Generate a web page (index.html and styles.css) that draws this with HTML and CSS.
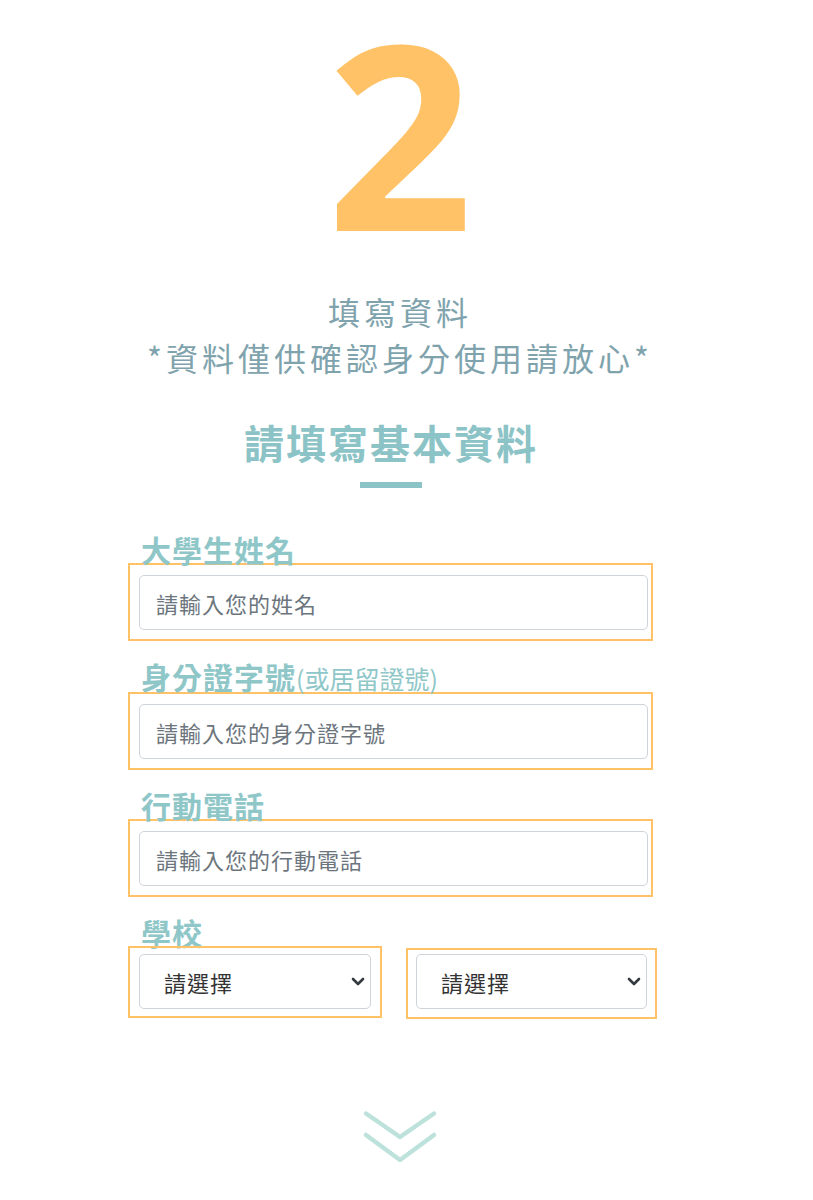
FILE: index.html
```html
<!DOCTYPE html>
<html lang="zh-Hant">
<head>
    <meta charset="UTF-8">
    <meta name="viewport" content="width=device-width, initial-scale=1.0">
    <title>填寫資料</title>
    <link rel="stylesheet" href="styles.css">
</head>
<body>
    <div class="page">
        <section class="step">
            <div class="step-num">2</div>
            <p class="step-title">填寫資料<br>*資料僅供確認身分使用請放心*</p>
        </section>

        <section class="intro">
            <h2 class="heading">請填寫基本資料</h2>
            <div class="bar"></div>
        </section>

        <form class="form">
            <label class="label" for="name">大學生姓名</label>
            <div class="box">
                <input class="control" type="text" id="name" placeholder="請輸入您的姓名">
            </div>

            <label class="label" for="idno">身分證字號<span class="label-note">(或居留證號)</span></label>
            <div class="box">
                <input class="control" type="text" id="idno" placeholder="請輸入您的身分證字號">
            </div>

            <label class="label" for="phone">行動電話</label>
            <div class="box">
                <input class="control" type="text" id="phone" placeholder="請輸入您的行動電話">
            </div>

            <label class="label" for="school">學校</label>
            <div class="row">
                <div class="box box-select">
                    <div class="select-wrap">
                        <select class="control select" id="school">
                            <option>請選擇</option>
                        </select>
                        <svg class="caret" width="14" height="9" viewBox="0 0 14 9"><path d="M2 2l5 5 5-5" fill="none" stroke="#343a40" stroke-width="2.6" stroke-linecap="round" stroke-linejoin="round"/></svg>
                    </div>
                </div>
                <div class="box box-select box-right">
                    <div class="select-wrap">
                        <select class="control select" id="dept">
                            <option>請選擇</option>
                        </select>
                        <svg class="caret" width="14" height="9" viewBox="0 0 14 9"><path d="M2 2l5 5 5-5" fill="none" stroke="#343a40" stroke-width="2.6" stroke-linecap="round" stroke-linejoin="round"/></svg>
                    </div>
                </div>
            </div>
        </form>

        <div class="more">
            <svg width="80" height="57" viewBox="0 0 80 57">
                <path d="M6 5.5L40 29L74 5.5" fill="none" stroke="#bde2db" stroke-width="4.5" stroke-linecap="round" stroke-linejoin="round"/>
                <path d="M6 27L40 52L74 27" fill="none" stroke="#bde2db" stroke-width="4.5" stroke-linecap="round" stroke-linejoin="round"/>
            </svg>
        </div>
    </div>
</body>
</html>
```

FILE: styles.css
```css
body {
    margin: 0;
    padding: 0;
    background-color: #fff;
    font-family: "Noto Sans CJK TC", "Noto Sans", sans-serif;
}
.page {
    width: 800px;
}
.step {
    text-align: center;
}
.step-num {
    padding-top: 4px;
    font-family: "Open Sans", "Noto Sans", sans-serif;
    font-size: 256px;
    font-weight: 700;
    line-height: 256px;
    color: #ffc266;
}
.step-title {
    margin: 28px 0 0;
    font-size: 32px;
    line-height: 46px;
    letter-spacing: 4px;
    color: #7fa3ad;
}
.intro {
    padding-right: 18px;
    text-align: center;
}
.heading {
    margin: 38px 0 0;
    font-size: 40px;
    font-weight: 700;
    line-height: 48px;
    letter-spacing: 2px;
    color: #8cc3c6;
}
.bar {
    width: 62px;
    height: 6px;
    margin: 16px auto 0;
    background-color: #8cc3c6;
}
.form {
    width: 530px;
    margin: 46px 0 0 128px;
}
.label {
    display: block;
    margin: 20px 0 -1px 13px;
    font-size: 30px;
    font-weight: 700;
    line-height: 30px;
    letter-spacing: 1px;
    color: #8fc7c9;
}
.label:first-child {
    margin-top: 0;
}
.label-note {
    font-size: 25px;
    font-weight: 400;
    letter-spacing: 0;
}
.box {
    width: 525px;
    box-sizing: border-box;
    padding: 10px 3px 9px 9px;
    border: 2px solid #ffc266;
}
.control {
    display: block;
    width: 100%;
    height: 55px;
    box-sizing: border-box;
    padding: 0 16px;
    font-family: "Noto Sans CJK TC", "Noto Sans", sans-serif;
    font-size: 22px;
    letter-spacing: 1px;
    color: #495057;
    background-color: #fff;
    border: 1px solid #ced4da;
    border-radius: 5px;
}
.control::placeholder {
    color: #6c757d;
}
.row {
    display: grid;
    grid-template-columns: 254px 251px;
    gap: 24px;
    align-items: start;
}
.box-select {
    width: auto;
    padding: 6px 9px 7px 9px;
}
.box-right {
    margin-top: 2px;
    padding: 4px 8px 8px 8px;
}
.select-wrap {
    position: relative;
}
.select {
    appearance: none;
    -webkit-appearance: none;
    padding-left: 24px;
    color: #333;
}
.caret {
    position: absolute;
    right: 6px;
    top: 23px;
    pointer-events: none;
}
.more {
    padding-top: 89px;
    text-align: center;
}
.more svg {
    display: inline-block;
}
```
